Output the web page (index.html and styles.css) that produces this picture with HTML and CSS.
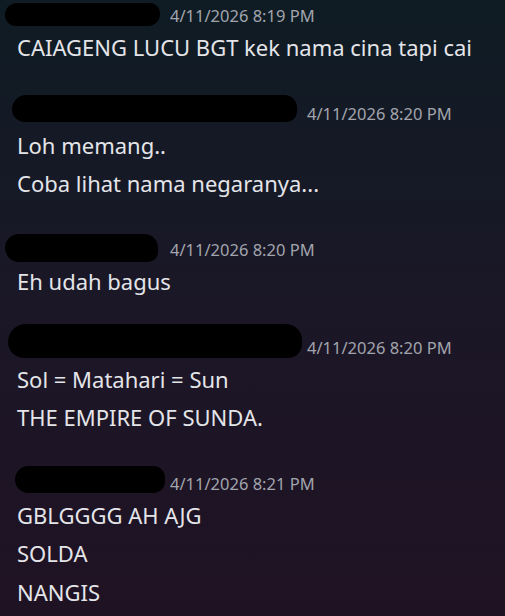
FILE: index.html
```html
<!DOCTYPE html>
<html lang="id">
<head>
<meta charset="utf-8">
<title>Chat</title>
<link rel="stylesheet" href="styles.css">
</head>
<body>
<main class="chat">
  <section class="group">
    <div class="head"><span class="blob blob-1"></span><span class="time">4/11/2026 8:19 PM</span></div>
    <p class="line">CAIAGENG LUCU BGT kek nama cina tapi cai</p>
  </section>
  <section class="group">
    <div class="head"><span class="blob blob-2"></span><span class="time">4/11/2026 8:20 PM</span></div>
    <p class="line">Loh memang..</p>
    <p class="line">Coba lihat nama negaranya...</p>
  </section>
  <section class="group">
    <div class="head"><span class="blob blob-3"></span><span class="time">4/11/2026 8:20 PM</span></div>
    <p class="line">Eh udah bagus</p>
  </section>
  <section class="group">
    <div class="head"><span class="blob blob-4"></span><span class="time">4/11/2026 8:20 PM</span></div>
    <p class="line">Sol = Matahari = Sun</p>
    <p class="line">THE EMPIRE OF SUNDA.</p>
  </section>
  <section class="group">
    <div class="head"><span class="blob blob-5"></span><span class="time">4/11/2026 8:21 PM</span></div>
    <p class="line">GBLGGGG AH AJG</p>
    <p class="line">SOLDA</p>
    <p class="line">NANGIS</p>
  </section>
</main>
</body>
</html>
```

FILE: styles.css
```css
html, body {
  margin: 0;
  height: 616px;
  overflow: hidden;
}

body {
  background: linear-gradient(180deg, #0f1c24 0%, #1b1727 50%, #1f1223 100%);
  font-family: "Noto Sans", "Open Sans", sans-serif;
}

.chat {
  display: flex;
  flex-direction: column;
  gap: 35.8px;
  padding: 4.25px 0 0 17px;
}

.group {
  display: flex;
  flex-direction: column;
}

.head {
  display: flex;
  align-items: center;
  height: 23.5px;
}

.time {
  font-size: 16.5px;
  line-height: 1;
  color: #a2a5ad;
  white-space: nowrap;
}

.line {
  margin: 0;
  font-size: 22px;
  line-height: 38.5px;
  color: #e4e5e9;
  white-space: nowrap;
}

.blob {
  display: block;
  flex: none;
  background: #000;
  border-radius: 14px;
}

.blob-1 { width: 155px; height: 23px; margin: 0 10px 4px -12px; border-radius: 12px 10px 12px 11px; }
.blob-2 { width: 285px; height: 27px; margin: 0 10px 10px -5px; border-radius: 16px 14px 12px 14px; }
.blob-3 { width: 153px; height: 28px; margin: 0 12px 4px -12px; border-radius: 14px 14px 10px 14px; }
.blob-4 { width: 294px; height: 34px; margin: 0 5px 13px -9px; border-radius: 18px 16px 14px 16px; }
.blob-5 { width: 150px; height: 27px; margin: 0 5px 9px -2px; border-radius: 14px 12px 12px 14px; }
```
